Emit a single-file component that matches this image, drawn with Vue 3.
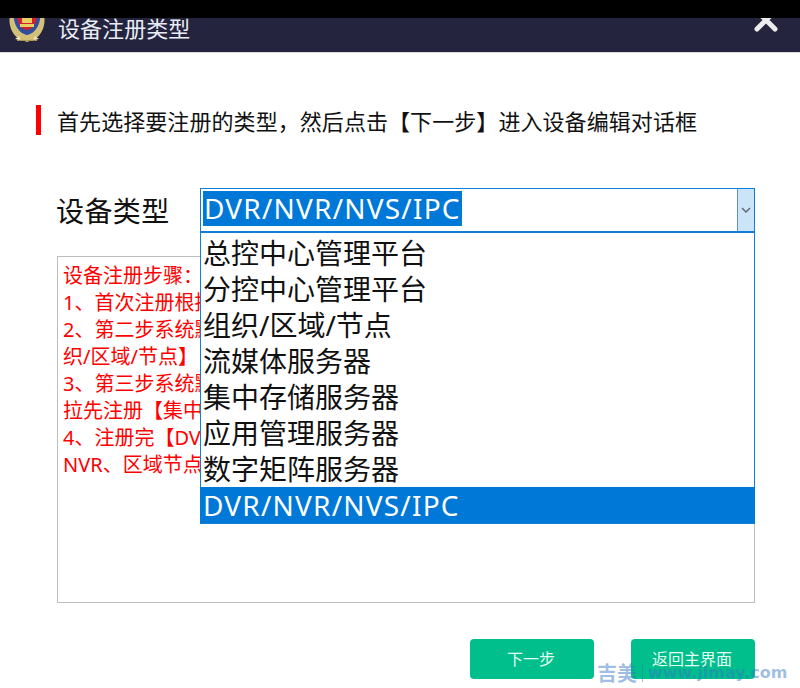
<template>
  <div class="dialog">
    <div class="top-strip"></div>
    <div class="title-bar">
      <svg class="badge" width="36" height="36" viewBox="0 0 36 36">
        <!-- wreath -->
        <path d="M1 6c-2 10 2 19 8 23l-1 3 5-1 5 2 5-2 5 1-1-3c6-4 10-13 8-23z" fill="#d2c078" />
        <path d="M9 29c4 3 14 3 18 0l-2 3H11z" fill="#a89650" />
        <!-- ring and red shield -->
        <path d="M5 0h26c2 12-3 24-13 26C8 24 3 12 5 0z" fill="#2f4f9d" />
        <path d="M8 0h20c1 10-2 20-10 21C10 20 7 10 8 0z" fill="#d2202c" />
        <rect x="13" y="9" width="10" height="5" fill="#e8cd62" />
        <rect x="11" y="15" width="14" height="3" fill="#e8cd62" />
        <path d="M6 30l4-3 2 4zM30 30l-4-3-2 4z" fill="#efe3ac" />
      </svg>
      <span class="title">设备注册类型</span>
      <svg class="close" width="24" height="24" viewBox="0 0 24 24">
        <path d="M3 3l18 18M21 3L3 21" stroke="#ececec" stroke-width="5" stroke-linecap="round" />
      </svg>
    </div>

    <div class="hint">
      <i class="hint-mark"></i>
      <span>首先选择要注册的类型，然后点击【下一步】进入设备编辑对话框</span>
    </div>

    <div class="type-row">
      <label class="type-label">设备类型</label>
      <div class="combo">
        <div class="combo-box">
          <span class="combo-value">{{ selected }}</span>
          <span class="combo-arrow">
            <svg width="10" height="6" viewBox="0 0 10 6">
              <path d="M1 1l4 4 4-4" fill="none" stroke="#5f6b78" stroke-width="1.5" />
            </svg>
          </span>
        </div>
        <ul class="combo-list">
          <li v-for="item in types" :key="item" :class="{ active: item === selected }">{{ item }}</li>
        </ul>
      </div>
    </div>

    <div class="steps">
      <p v-for="line in steps" :key="line">{{ line }}</p>
    </div>

    <div class="actions">
      <button class="btn">下一步</button>
      <button class="btn">返回主界面</button>
    </div>

    <div class="watermark"><span class="wm-cn">吉美</span><span class="wm-bar"></span>www.jimay.com</div>
  </div>
</template>

<script setup>
const selected = 'DVR/NVR/NVS/IPC'

const types = [
  '总控中心管理平台',
  '分控中心管理平台',
  '组织/区域/节点',
  '流媒体服务器',
  '集中存储服务器',
  '应用管理服务器',
  '数字矩阵服务器',
  'DVR/NVR/NVS/IPC'
]

const steps = [
  '设备注册步骤：',
  '1、首次注册根据',
  '2、第二步系统默',
  '织/区域/节点】',
  '3、第三步系统默',
  '拉先注册【集中',
  '4、注册完【DVR',
  'NVR、区域节点'
]
</script>

<style>
html, body {
  margin: 0;
  background: #fff;
}
</style>

<style scoped>
.dialog {
  position: relative;
  width: 800px;
  height: 688px;
  overflow: hidden;
  background: #fff;
  font-family: "Noto Sans", "Noto Sans CJK SC", sans-serif;
  color: #111;
}
.top-strip {
  position: absolute;
  top: 0;
  left: 0;
  right: 0;
  height: 18px;
  background: #000;
  z-index: 2;
}
.title-bar {
  display: flex;
  align-items: flex-start;
  height: 53px;
  box-sizing: border-box;
  padding: 9px 22px 0 9px;
  background: #24243f;
  border-bottom: 1px solid #d8d8de;
}
.badge {
  flex: none;
}
.title {
  margin-left: 13px;
  font-size: 22px;
  letter-spacing: 0.05px;
  line-height: 38px;
  color: #e8edf5;
}
.close {
  margin-left: auto;
  margin-top: -1px;
}
.hint {
  display: flex;
  align-items: center;
  margin: 52px 0 0 36px;
  height: 30px;
  font-size: 22px;
  letter-spacing: 0.07px;
}
.hint-mark {
  width: 5px;
  height: 30px;
  margin-right: 16px;
  background: #f00;
}
.type-row {
  display: flex;
  align-items: flex-start;
  margin: 53px 0 0 56px;
}
.type-label {
  width: 144px;
  font-size: 28px;
  letter-spacing: 0.4px;
  line-height: 46px;
}
.combo {
  position: relative;
  width: 555px;
  z-index: 1;
}
.combo-box {
  display: flex;
  height: 45px;
  box-sizing: border-box;
  border: 1px solid #0f7fd8;
  border-bottom-width: 2px;
  background: #fff;
}
.combo-value {
  margin: 2px 0 0 2px;
  padding: 0 1px;
  height: 35px;
  font-size: 28px;
  letter-spacing: 1.2px;
  line-height: 35px;
  color: #fff;
  background: #0078d7;
}
.combo-arrow {
  display: flex;
  align-items: center;
  justify-content: center;
  width: 16px;
  margin-left: auto;
  background: #cce4f7;
  border-left: 1px solid #5c94c5;
}
.combo-list {
  position: absolute;
  top: 45px;
  left: 0;
  right: 0;
  margin: 0;
  padding: 2px 0 0;
  list-style: none;
  background: #fff;
  border: 1px solid #0f7fd8;
  border-top: 0;
}
.combo-list li {
  height: 36px;
  padding-left: 2px;
  font-size: 28px;
  line-height: 36px;
  white-space: nowrap;
}
.combo-list li.active {
  margin: 0 -1px;
  padding-left: 3px;
  letter-spacing: 1.2px;
  color: #fff;
  background: #0078d7;
}
.steps {
  box-sizing: border-box;
  width: 698px;
  height: 347px;
  margin: 22px 0 0 57px;
  padding: 5px 5px;
  border: 1px solid #bdbdbd;
  color: #f00;
  font-size: 20px;
  line-height: 27px;
}
.steps p {
  margin: 0;
  white-space: nowrap;
}
.actions {
  display: flex;
  justify-content: flex-end;
  gap: 37px;
  margin: 36px 45px 0 0;
}
.btn {
  width: 124px;
  height: 40px;
  padding: 0 2px 2px 0;
  border: 0;
  border-radius: 4px;
  background: #00bf8c;
  color: #e4fbf3;
  font-family: inherit;
  font-size: 16px;
}
.watermark {
  position: absolute;
  left: 597px;
  top: 660px;
  display: flex;
  align-items: center;
  font-family: "DejaVu Sans", "Noto Sans CJK SC", sans-serif;
  font-size: 16px;
  font-weight: 700;
  line-height: 26px;
  color: rgba(50, 120, 195, 0.48);
  white-space: nowrap;
}
.wm-cn {
  font-family: "Noto Sans CJK SC", sans-serif;
  font-size: 20px;
}
.wm-bar {
  width: 1px;
  height: 18px;
  margin: 0 5px;
  background: rgba(50, 120, 195, 0.48);
}
</style>
